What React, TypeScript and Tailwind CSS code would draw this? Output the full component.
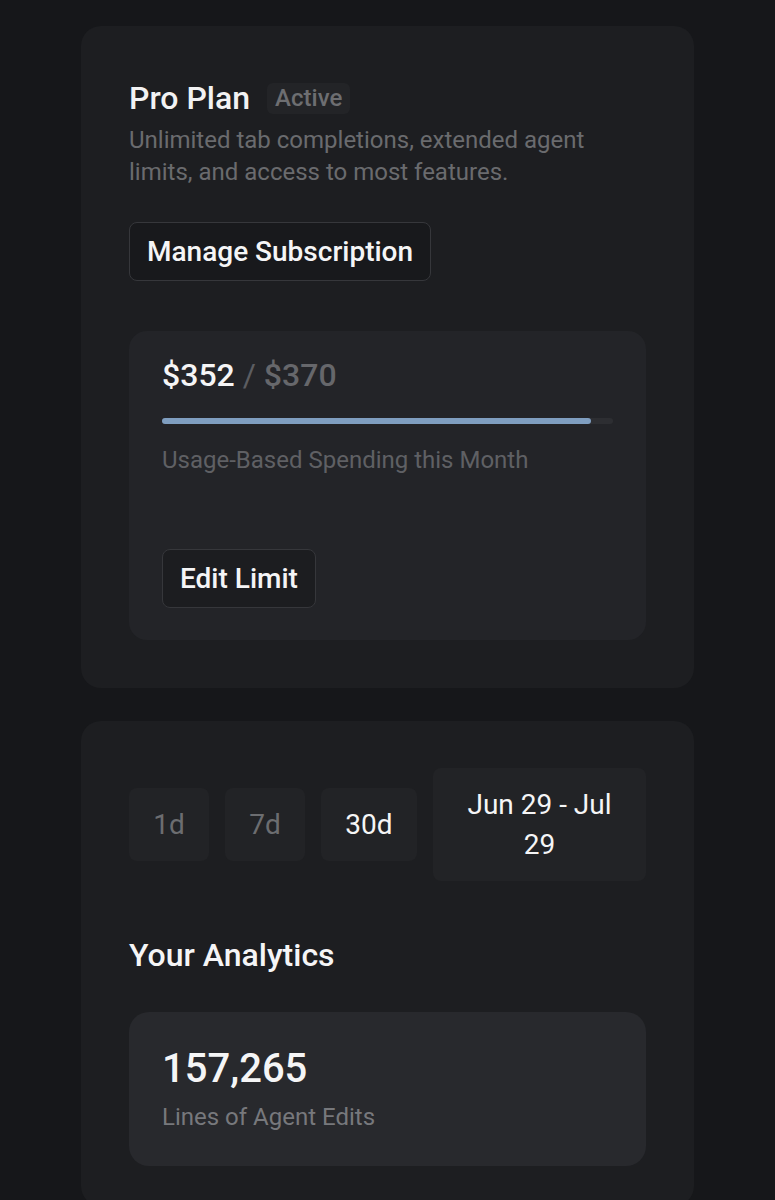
export default function App() {
  return (
    <div className="min-h-[1200px] bg-[#16171a] px-[81px] pt-[26px] font-['Roboto',sans-serif]">
      {/* Plan card */}
      <div className="rounded-[20px] bg-[#1d1e21] px-[48px] pb-[48px] pt-[56px]">
        <div className="flex items-center gap-[17px]">
          <h2 className="text-[32px] font-medium leading-[32px] text-[#f2f2f3]">Pro Plan</h2>
          <span className="rounded-[6px] bg-[#232427] px-[8px] py-[1px] text-[24px] leading-[29px] font-medium text-[#6d6e71]">
            Active
          </span>
        </div>
        <p className="mt-[10px] text-[24px] leading-[32px] text-[#6a6b6e]">
          Unlimited tab completions, extended agent limits, and access to most features.
        </p>
        <button className="mt-[34px] h-[59px] rounded-[8px] border border-[#36373b] bg-[#18191c] px-[17px] text-[28px] font-medium text-[#f5f5f6]">
          Manage Subscription
        </button>

        {/* Usage */}
        <div className="mt-[50px] rounded-[18px] bg-[#232428] px-[33px] pb-[32px] pt-[26px]">
          <div className="text-[32px] font-medium leading-[36px]">
            <span className="text-[#f5f5f6]">$352</span>
            <span className="font-normal text-[#5c5d61]"> / </span>
            <span className="text-[#66676b]">$370</span>
          </div>
          <div className="mt-[25px] h-[6px] w-full rounded-full bg-[#2d2e32]">
            <div className="h-full rounded-full bg-[#7f9ec0]" style={{ width: `${(352 / 370) * 100}%` }} />
          </div>
          <p className="mt-[20px] text-[24px] leading-[32px] text-[#5f6064]">Usage-Based Spending this Month</p>
          <button className="mt-[73px] h-[59px] rounded-[8px] border border-[#36373b] bg-[#1c1d20] px-[17px] text-[28px] font-medium text-[#f5f5f6]">
            Edit Limit
          </button>
        </div>
      </div>

      {/* Analytics card */}
      <div className="mt-[33px] rounded-[20px] bg-[#1d1e21] px-[48px] pt-[47px] pb-[40px]">
        <div className="flex items-center gap-[16px]">
          {["1d", "7d"].map((d) => (
            <button key={d} className="h-[73px] w-[80px] rounded-[8px] bg-[#222326] text-[28px] text-[#6c6d70]">
              {d}
            </button>
          ))}
          <button className="h-[73px] w-[96px] rounded-[8px] bg-[#222326] text-[28px] text-[#f5f5f6]">30d</button>
          <button className="h-[113px] flex-1 rounded-[8px] bg-[#222326] px-[30px] text-[28px] leading-[40px] text-[#f5f5f6]">
            Jun 29 - Jul 29
          </button>
        </div>

        <h3 className="mt-[56px] text-[32px] font-medium leading-[36px] text-[#f5f5f6]">Your Analytics</h3>

        <div className="mt-[39px] rounded-[20px] bg-[#28292d] px-[33px] pb-[34px] pt-[35px]">
          <div className="text-[40px] font-medium leading-[44px] text-[#f5f5f6]">157,265</div>
          <div className="mt-[11px] text-[24px] leading-[30px] text-[#77787c]">Lines of Agent Edits</div>
        </div>
      </div>
    </div>
  );
}
